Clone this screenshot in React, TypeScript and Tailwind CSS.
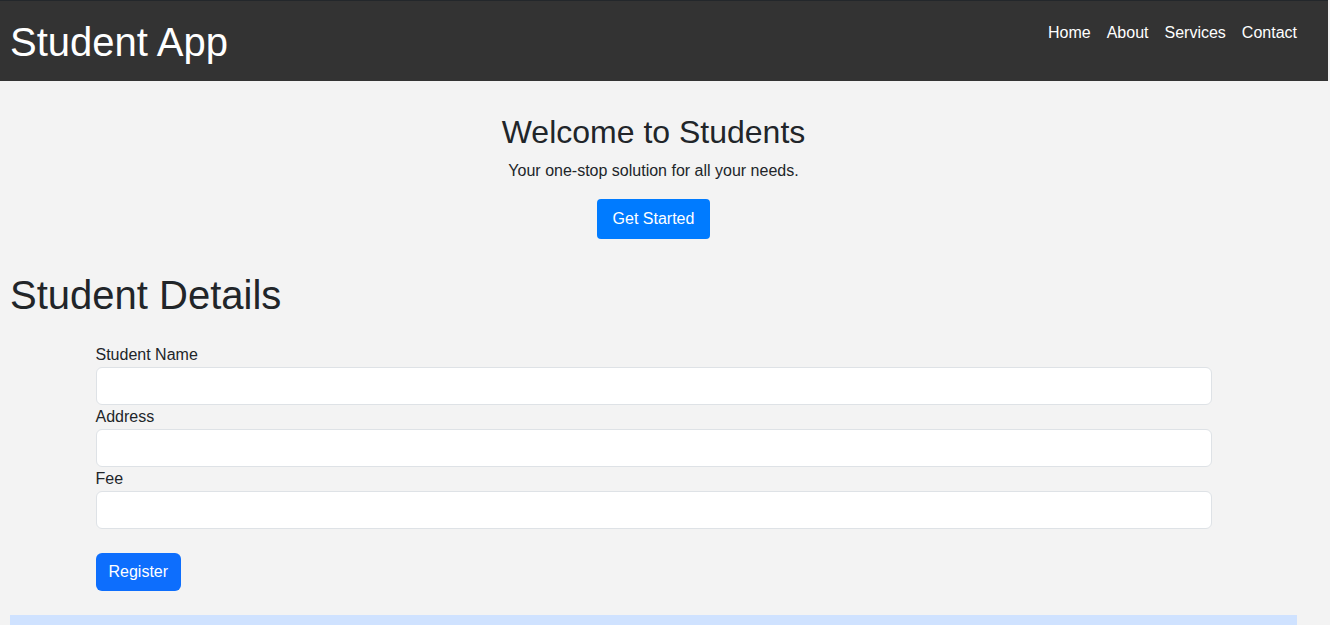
export default function App() {
  const fields = ["Student Name", "Address", "Fee"];

  return (
    <div className="min-h-screen bg-[#f3f3f3] font-['Liberation_Sans',Arial,sans-serif] text-[#212529]">
      <header className="flex h-[81px] w-[1328px] items-start justify-between border-t border-[#23272b] bg-[#333333] text-white">
        <h1 className="ml-[10px] mt-[17px] text-[40px] leading-[48px]">Student App</h1>
        <nav className="mr-[31px] mt-[20px] flex gap-[16px] text-[16px] leading-[24px]">
          <a href="#">Home</a>
          <a href="#">About</a>
          <a href="#">Services</a>
          <a href="#">Contact</a>
        </nav>
      </header>

      <main className="w-[1307px] px-[10px]">
        <section className="flex flex-col items-center pt-[32px]">
          <h2 className="text-[32px] leading-[38px]">Welcome to Students</h2>
          <p className="mt-[8px] text-[16px] leading-[24px]">Your one-stop solution for all your needs.</p>
          <button className="mt-[16px] h-[40px] rounded-[4px] bg-[#007bff] px-[16px] text-[16px] text-white">
            Get Started
          </button>
        </section>

        <h1 className="mt-[32px] text-[40px] leading-[48px]">Student Details</h1>

        <form className="mx-auto mt-[24px] w-[1140px] px-[12px]">
          {fields.map((f) => (
            <div key={f}>
              <label className="block text-[16px] leading-[24px]">{f}</label>
              <input
                type="text"
                className="block h-[38px] w-full rounded-[6px] border border-[#dee2e6] bg-white px-3"
              />
            </div>
          ))}
          <button
            type="button"
            className="mt-[24px] h-[38px] rounded-[6px] bg-[#0d6efd] px-[13px] text-[16px] text-white"
          >
            Register
          </button>
        </form>

        <div className="mt-[24px] h-[60px] bg-[#cfe2ff]"></div>
      </main>
    </div>
  );
}
